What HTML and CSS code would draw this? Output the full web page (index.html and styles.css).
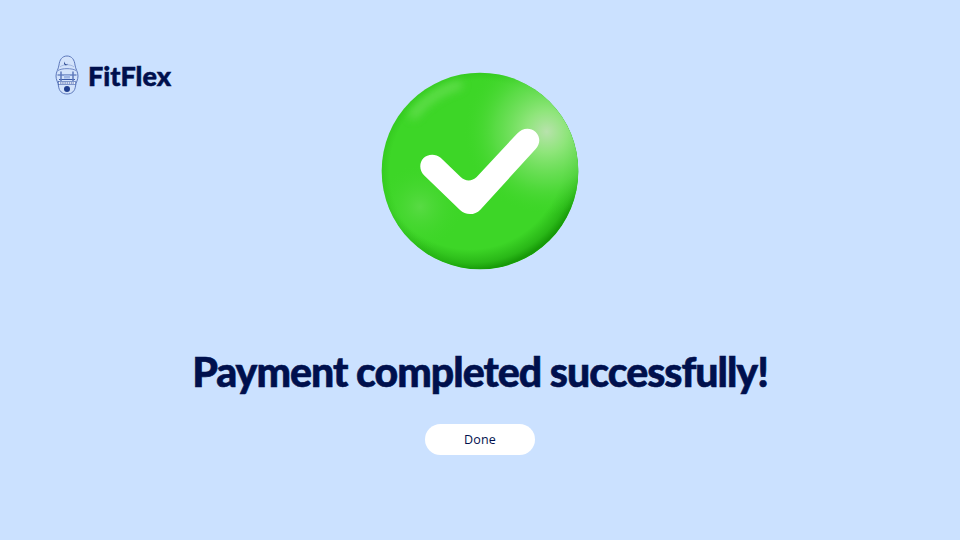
FILE: index.html
```html
<!DOCTYPE html>
<html lang="en">
<head>
<meta charset="utf-8">
<title>Payment completed</title>
<link rel="stylesheet" href="styles.css">
</head>
<body>
<main class="page">
  <header class="brand">
    <svg class="brand-mark" viewBox="0 0 24 40" aria-hidden="true">
      <path d="M12 1C7 1 4.500 5 4 10 3.500 14 1 17 1 21c0 4 2 6 2.500 10C4 36 7 39 12 39s8-3 8.500-8c.5-4 2.500-6 2.500-10 0-4-2.500-7-3-11C19.500 5 17 1 12 1z" fill="#d3e3fb" stroke="#5d78bb" stroke-width="1"/>
      <path d="M5 12C8 9 16 9 19 12" fill="none" stroke="#a3b8e2" stroke-width="1"/>
      <path d="M10 6.500a2 2 0 1 0 3 2 1.700 1.700 0 0 1-3-2z" fill="#2a478f"/>
      <path d="M3 15.500C7 13 17 13 21 15.500" fill="none" stroke="#6f88c6" stroke-width="1"/>
      <path d="M2.500 20h19M4 24.500h16" fill="none" stroke="#3a5aa8" stroke-width="1.100"/>
      <path d="M6 16.500v9.500M18 16.500v9.500" fill="none" stroke="#5d78bb" stroke-width="1.500"/>
      <rect x="9" y="20" width="6" height="3.500" fill="#9fb6e4"/>
      <rect x="3.500" y="26.500" width="17" height="3.200" fill="#eef3fc" stroke="#3a5aa8" stroke-width=".6"/>
      <path d="M5 28h14" stroke="#3a5aa8" stroke-width="1" stroke-dasharray="1.500 .7"/>
      <circle cx="12" cy="34" r="3" fill="#1f3d8e"/>
    </svg>
    <span class="brand-name">FitFlex</span>
  </header>

  <section class="status">
    <svg class="status-icon" viewBox="0 0 660 660" aria-hidden="true">
      <defs>
        <radialGradient id="ball" gradientUnits="userSpaceOnUse" cx="330" cy="333" r="295">
          <stop offset="0" stop-color="#3dd627"/>
          <stop offset=".92" stop-color="#3dd627"/>
          <stop offset="1" stop-color="#35cb20"/>
        </radialGradient>
        <radialGradient id="shine" gradientUnits="userSpaceOnUse" cx="530" cy="215" r="250">
          <stop offset="0" stop-color="#b8e2ac"/>
          <stop offset=".25" stop-color="#93e67f" stop-opacity=".95"/>
          <stop offset=".62" stop-color="#62dd4e" stop-opacity=".75"/>
          <stop offset="1" stop-color="#3dd627" stop-opacity="0"/>
        </radialGradient>
        <radialGradient id="glow" gradientUnits="userSpaceOnUse" cx="150" cy="440" r="130">
          <stop offset="0" stop-color="#5fdc4b" stop-opacity=".8"/>
          <stop offset="1" stop-color="#3dd627" stop-opacity="0"/>
        </radialGradient>
        <radialGradient id="rim" gradientUnits="userSpaceOnUse" cx="300" cy="285" r="345">
          <stop offset=".82" stop-color="#1fa80f" stop-opacity="0"/>
          <stop offset=".94" stop-color="#1fa80f" stop-opacity=".65"/>
          <stop offset="1" stop-color="#179a08"/>
        </radialGradient>
        <clipPath id="disc"><circle cx="330" cy="333" r="295"/></clipPath>
        <filter id="soft" x="-30%" y="-60%" width="160%" height="220%"><feGaussianBlur stdDeviation="14"/></filter>
      </defs>
      <circle cx="330" cy="333" r="295" fill="url(#ball)"/>
      <g clip-path="url(#disc)">
        <circle cx="330" cy="333" r="295" fill="url(#rim)"/>
        <circle cx="330" cy="333" r="295" fill="url(#shine)"/>
        <circle cx="330" cy="333" r="295" fill="url(#glow)"/>
        <path d="M130 165C170 115 215 90 265 75" fill="none" stroke="#74e261" stroke-width="24" stroke-linecap="round" filter="url(#soft)" opacity=".75"/>
      </g>
      <path d="M160 295C172 282 196 280 212 293L272 351C286 365 306 365 320 351L441 221C456 204 480 200 497 216 512 231 511 252 497 267L331 449C314 467 286 466 270 450L162 346C148 332 147 309 160 295Z" fill="#fff"/>
    </svg>
    <h1 class="status-title">Payment completed successfully!</h1>
    <button class="done-button" type="button">Done</button>
  </section>
</main>
</body>
</html>
```
FILE: styles.css
```css
* { box-sizing: border-box; }

html, body {
  margin: 0;
  height: 100%;
}

body {
  background: #cbe1ff;
  color: #00104d;
}

.page {
  width: 960px;
  height: 540px;
  overflow: hidden;
  display: flex;
  flex-direction: column;
}

.brand {
  display: flex;
  align-items: center;
  gap: 9px;
  height: 40px;
  margin-top: 55px;
  padding-left: 55px;
}

.brand-mark {
  width: 24px;
  height: 40px;
  flex: none;
}

.brand-name {
  font-family: "Lato", sans-serif;
  font-weight: 900;
  font-size: 27px;
  line-height: 40px;
  padding-top: 1px;
  -webkit-text-stroke: 0.5px #00104d;
}

.status {
  display: flex;
  flex-direction: column;
  align-items: center;
  margin-top: -35px;
}

.status-icon {
  width: 220px;
  height: 220px;
  display: block;
}

.status-title {
  margin: 62px 0 0;
  font-family: "Lato", sans-serif;
  font-weight: 900;
  font-size: 41px;
  line-height: 60px;
  letter-spacing: -1px;
  white-space: nowrap;
  -webkit-text-stroke: 0.6px #00104d;
}

.done-button {
  width: 110px;
  height: 31px;
  margin-top: 22px;
  border: 0;
  border-radius: 16px;
  padding: 0;
  background: #fff;
  color: #00104d;
  font-family: "Open Sans", sans-serif;
  font-size: 12.500px;
  letter-spacing: 0.2px;
}
```
